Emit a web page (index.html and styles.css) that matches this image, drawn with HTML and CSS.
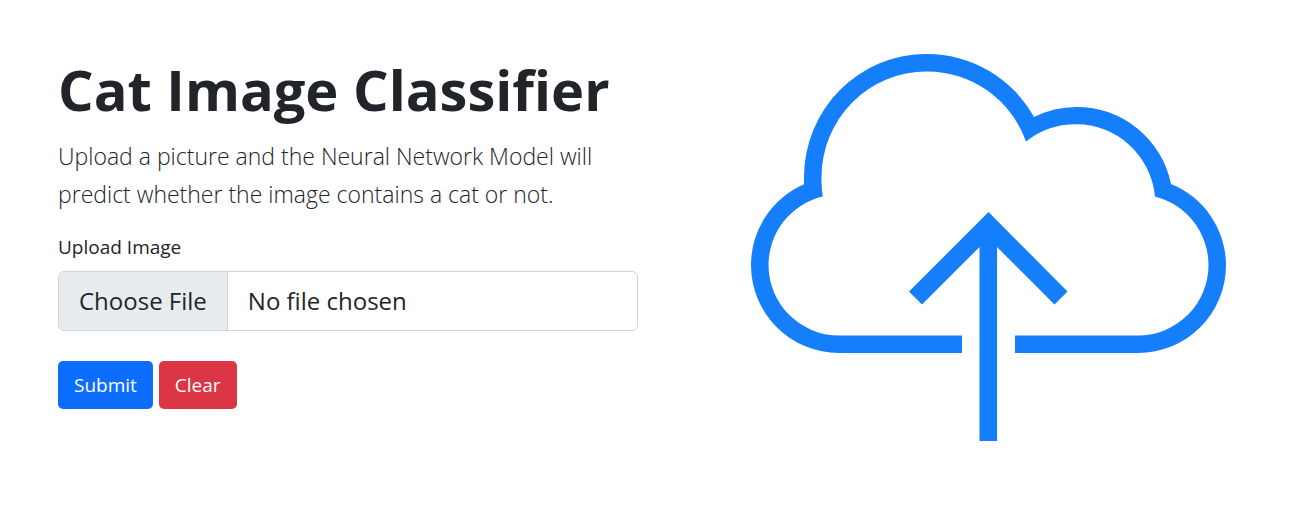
FILE: index.html
```html
<!DOCTYPE html>
<html lang="en">
<head>
<meta charset="utf-8">
<meta name="viewport" content="width=device-width, initial-scale=1">
<title>Cat Image Classifier</title>
<link rel="stylesheet" href="styles.css">
</head>
<body>
<main class="hero">
  <section class="intro">
    <h1 class="title">Cat Image Classifier</h1>
    <p class="lead">Upload a picture and the Neural Network Model will predict whether the image contains a cat or not.</p>
    <form class="upload-form">
      <label class="form-label" for="image">Upload Image</label>
      <input class="file-input" type="file" id="image" name="image" accept="image/*">
      <div class="actions">
        <button class="btn btn-primary" type="submit">Submit</button>
        <button class="btn btn-danger" type="reset">Clear</button>
      </div>
    </form>
  </section>
  <div class="artwork">
    <svg class="cloud" viewBox="750 52 476 389" fill="#147efb" role="img" aria-label="Cloud upload">
      <path d="M962 353H839A88 88 0 0 1 751 265A88 88 0 0 1 804 184.300V177A122.500 123 0 0 1 926.500 54A122.500 123 0 0 1 1034 117A96 96 0 0 1 1076 107A96 96 0 0 1 1171 184A88 88 0 0 1 1226 265A88 88 0 0 1 1138 353H1015V335.500H1138A70.500 70.500 0 0 0 1208.500 265A71 71 0 0 0 1155 196.500A79 80 0 0 0 1076 124.300A80 80 0 0 0 1026 141.500A105 105.500 0 0 0 926.500 71.500A105 105.500 0 0 0 821.500 177Q821.300 187 822.700 196.500A70.500 70.500 0 0 0 768.500 265A70.500 70.500 0 0 0 839 335.500H962Z"/>
      <path d="M979.500 441V247L922 304.500L909 291.500L988.500 212L1067.500 291.500L1054.500 304.500L997 247V441Z"/>
    </svg>
  </div>
</main>
</body>
</html>
```
FILE: styles.css
```css
* { box-sizing: border-box; }

body {
  margin: 0;
  background: #fff;
  color: #212529;
  font-family: "Segoe UI", "Open Sans", "Noto Sans", sans-serif;
  font-size: 19px;
  line-height: 28px;
}

.hero {
  display: grid;
  grid-template-columns: 1fr 1fr;
  gap: 60px;
  padding: 52px 18px 52px 58px;
}

.title {
  margin: 0 0 10px;
  font-size: 56px;
  font-weight: 700;
  line-height: 75px;
}

.lead {
  margin: 0 0 20px;
  font-size: 23px;
  font-weight: 300;
  line-height: 38px;
}

.upload-form {
  display: flex;
  flex-direction: column;
}

.form-label { margin-bottom: 10px; }

.file-input {
  width: 100%;
  height: 60px;
  border: 1px solid #ced4da;
  border-radius: 6px;
  background: #fff;
  color: #212529;
  font-family: inherit;
  font-size: 24px;
  line-height: 38px;
  overflow: hidden;
}

.file-input::file-selector-button {
  height: 58px;
  margin: 0 20px 0 0;
  padding: 10px 20px;
  border: 0 solid #ced4da;
  border-right-width: 1px;
  background: #e9ecef;
  color: inherit;
  font: inherit;
}

.actions {
  display: flex;
  gap: 6px;
  margin-top: 30px;
}

.btn {
  padding: 9px 15px;
  border: 1px solid transparent;
  border-radius: 5px;
  color: #fff;
  font-family: inherit;
  font-size: 19px;
  line-height: 28px;
}

.btn-primary { background: #0d6efd; }
.btn-danger { background: #dc3545; }

.artwork {
  display: flex;
  justify-content: center;
  align-items: flex-start;
}

.cloud {
  display: block;
  width: 100%;
  max-width: 476px;
}
```
